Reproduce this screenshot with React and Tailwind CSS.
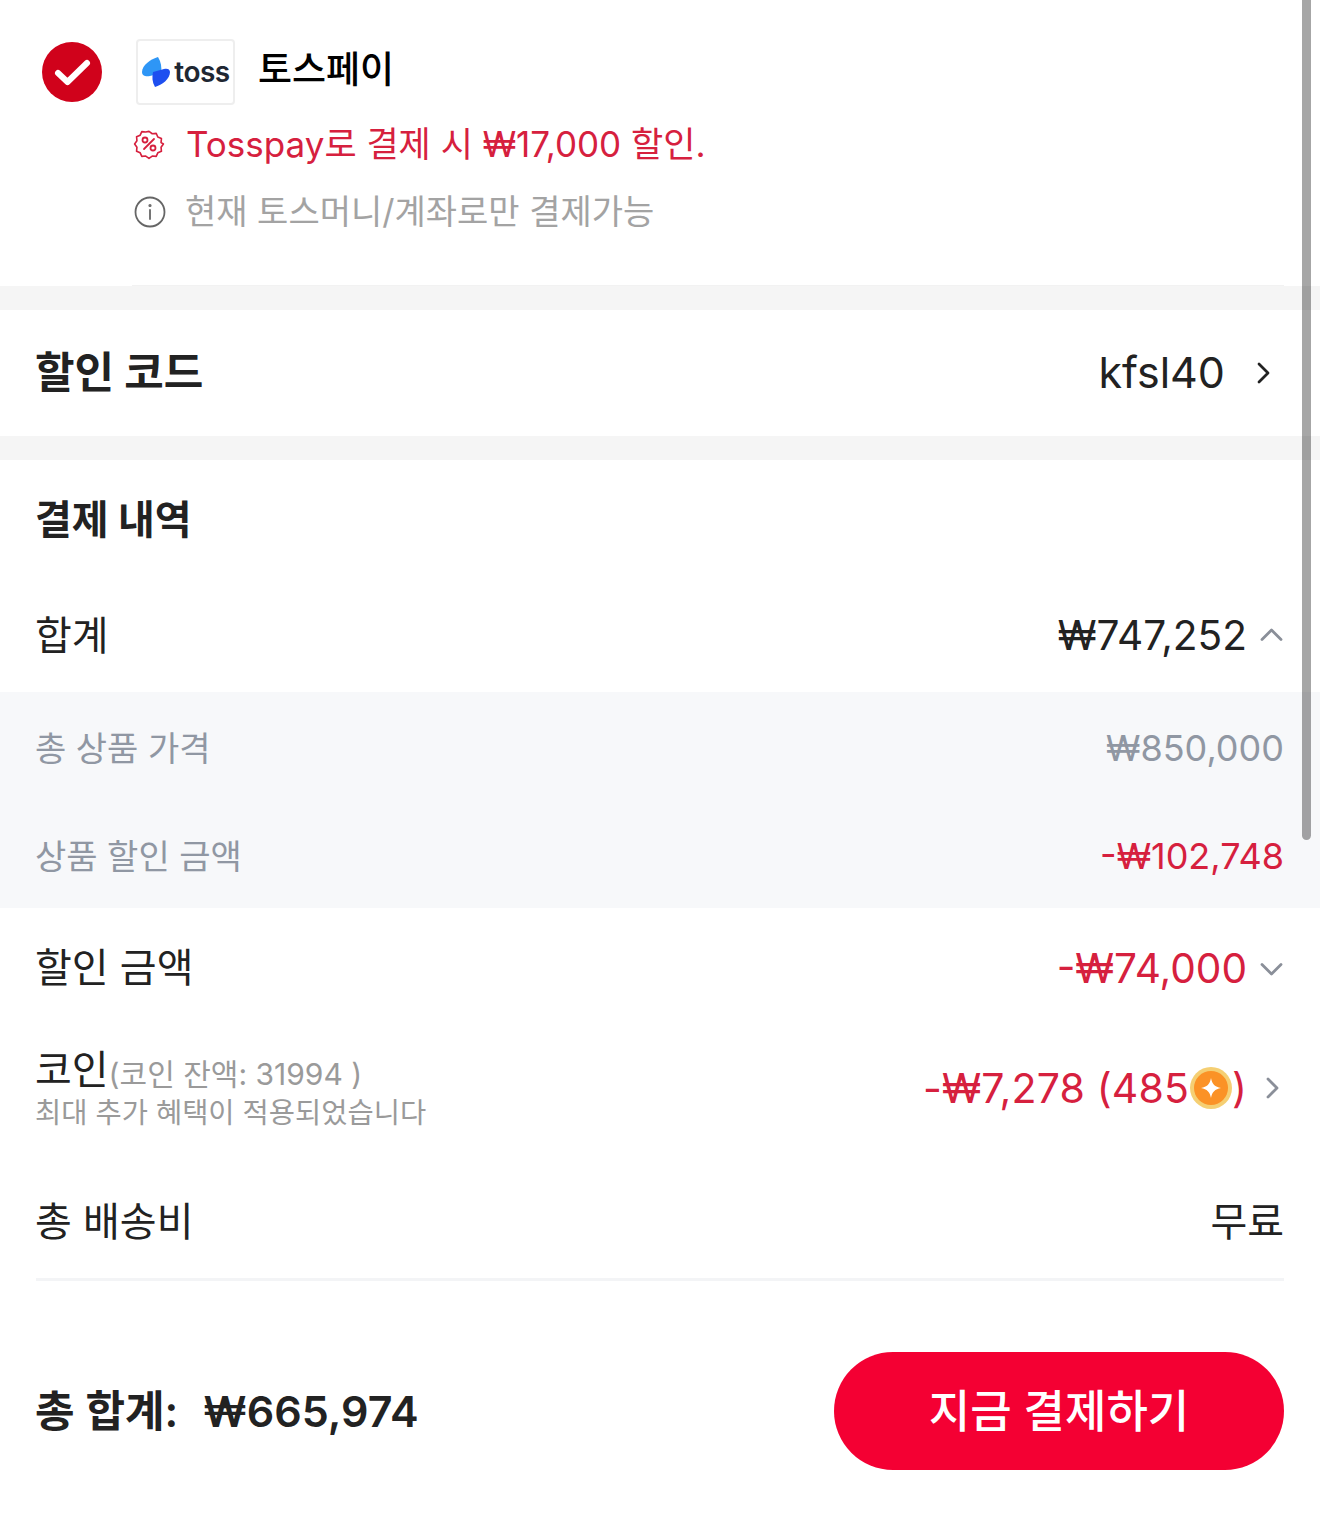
function ChevronRight({ className }) {
  return (
    <svg viewBox="0 0 13 22" className={className} fill="none" stroke="currentColor" strokeWidth="2.800" strokeLinecap="round" strokeLinejoin="round">
      <path d="M2 2l9 9-9 9" />
    </svg>
  );
}
function ChevronUp({ className }) {
  return (
    <svg viewBox="0 0 23 13" className={className} fill="none" stroke="currentColor" strokeWidth="2.800" strokeLinecap="round" strokeLinejoin="round">
      <path d="M2 11.500l9.500-9.500 9.500 9.500" />
    </svg>
  );
}
function ChevronDown({ className }) {
  return (
    <svg viewBox="0 0 23 13" className={className} fill="none" stroke="currentColor" strokeWidth="2.800" strokeLinecap="round" strokeLinejoin="round">
      <path d="M2 1.500l9.500 9.500 9.500-9.500" />
    </svg>
  );
}

function TossLogo() {
  return (
    <div className="ml-[4px] flex h-[66px] w-[99px] items-center justify-center gap-[3px] rounded-[4px] border-2 border-[#eeeeee] bg-white pl-[1px]">
      <svg viewBox="0 0 29 30" className="h-[30px] w-[29px] shrink-0">
        <path d="M16 0C9 2 0 8 0 15c0 4 4 5 8 4l11-3c1-6 0-11-3-16z" fill="#2e96f6" />
        <path d="M13 30c7-2 15-8 15-15 0-3-3-4-6-3l-11 3c-1 5-1 10 2 15z" fill="#1e4ff0" />
      </svg>
      <span className="text-[28px] font-semibold leading-none tracking-[-0.5px] text-[#1f2733]">toss</span>
    </div>
  );
}

function Row({ className = "", children }) {
  return <div className={"flex items-center justify-between " + className}>{children}</div>;
}

export default function App() {
  return (
    <div className="relative h-[1531px] w-[1320px] overflow-hidden bg-white font-['Inter','Noto_Sans_CJK_KR',sans-serif] text-[#222222]">
      <section className="flex h-[286px] pl-[41px] pr-[36px]">
        <div className="pt-[41px]">
          <svg viewBox="0 0 62 62" className="h-[62px] w-[62px]">
            <circle cx="31" cy="31" r="30" fill="#d0021b" />
            <path d="M17 32l9.500 9L46 22" fill="none" stroke="#fff" strokeWidth="6" strokeLinecap="round" strokeLinejoin="round" />
          </svg>
        </div>
        <div className="ml-[29px] flex flex-1 flex-col border-b border-[#f2f2f2]">
          <div className="mt-[39px] flex items-center">
            <TossLogo />
            <span className="-mt-[6px] ml-[23px] text-[37px] font-medium leading-none text-black">토스페이</span>
          </div>
          <div className="mt-[17px] flex h-[44px] items-center">
            <svg viewBox="0 0 32 32" className="ml-[1px] h-[32px] w-[32px]" fill="none" stroke="#d6203e" strokeWidth="1.800" strokeLinecap="round" strokeLinejoin="round">
              <path d="M16 2l3.600 2.600 4.400-.4 1.800 4 4 1.800-.4 4.400L32 16l-2.600 3.600.4 4.400-4 1.800-1.800 4-4.400-.4L16 32l-3.600-2.600-4.400.4-1.800-4-4-1.800.4-4.400L0 16l2.600-3.600-.4-4.400 4-1.800 1.800-4 4.400.4z" transform="translate(1.600 1.600) scale(0.9)" />
              <path d="M21 11L11 21" />
              <circle cx="12" cy="12" r="2.500" />
              <circle cx="20" cy="20" r="2.500" />
            </svg>
            <span className="ml-[21px] text-[35px] leading-none text-[#d6203e]">Tosspay로 결제 시 ₩17,000 할인.</span>
          </div>
          <div className="mt-[24px] flex h-[44px] items-center">
            <svg viewBox="0 0 32 32" className="ml-[2px] h-[32px] w-[32px]" fill="none" stroke="#666666" strokeWidth="1.800" strokeLinecap="round">
              <circle cx="16" cy="16" r="14.500" />
              <path d="M16 14v9" />
              <circle cx="16" cy="9.500" r="0.700" />
            </svg>
            <span className="ml-[19px] text-[34px] leading-none text-[#a3a3a3]">현재 토스머니/계좌로만 결제가능</span>
          </div>
        </div>
      </section>

      <div className="h-[24px] bg-[#f5f5f5]" />

      <Row className="h-[126px] pb-[1px] pl-[35px] pr-[50px]">
        <span className="text-[43px] font-bold leading-none">할인 코드</span>
        <div className="flex items-center">
          <span className="text-[43px] leading-none">kfsl40</span>
          <ChevronRight className="ml-[32px] h-[22px] w-[13px] text-[#222222]" />
        </div>
      </Row>

      <div className="h-[24px] bg-[#f5f5f5]" />

      <section>
        <div className="flex h-[118px] items-center pl-[35px] pr-[36px] pt-[2px]">
          <span className="text-[40px] font-bold leading-none">결제 내역</span>
        </div>
        <Row className="h-[114px] pl-[35px] pr-[37px] pt-[2px]">
          <span className="text-[40px] leading-none">합계</span>
          <div className="flex items-center">
            <span className="text-[40.600px] leading-none">₩747,252</span>
            <ChevronUp className="-mt-[4px] ml-[13px] h-[13px] w-[23px] text-[#8a8f99]" />
          </div>
        </Row>
        <div className="bg-[#f7f8fa]">
          <Row className="h-[108px] pl-[35px] pr-[36px] pt-[4px] text-[#9097a3]">
            <span className="pt-[2px] text-[34px] leading-none">총 상품 가격</span>
            <span className="text-[36px] leading-none">₩850,000</span>
          </Row>
          <Row className="h-[108px] pl-[35px] pr-[36px] pt-[4px]">
            <span className="pt-[2px] text-[34px] leading-none text-[#9097a3]">상품 할인 금액</span>
            <span className="text-[36px] leading-none text-[#d6203e]">-₩102,748</span>
          </Row>
        </div>
        <Row className="h-[120px] pl-[35px] pr-[37px]">
          <span className="text-[40px] leading-none">할인 금액</span>
          <div className="flex items-center pt-[2px]">
            <span className="text-[40.600px] leading-none text-[#d6203e]">-₩74,000</span>
            <ChevronDown className="ml-[13px] h-[13px] w-[23px] text-[#8a8f99]" />
          </div>
        </Row>
        <Row className="h-[120px] pl-[35px] pr-[41px]">
          <div className="flex flex-col">
            <div className="flex items-end">
              <span className="text-[40px] leading-[44px]">코인</span>
              <span className="pb-[3px] text-[30px] leading-none text-[#9a9a9a]">(코인 잔액: 31994 )</span>
            </div>
            <span className="mt-[7px] text-[28.500px] leading-none text-[#9a9a9a]">최대 추가 혜택이 적용되었습니다</span>
          </div>
          <div className="flex items-center">
            <span className="text-[41px] leading-none tracking-[0.16px] text-[#d6203e]">-₩7,278 (485</span>
            <svg viewBox="0 0 42 42" className="ml-[1px] h-[42px] w-[42px]">
              <circle cx="21" cy="21" r="21" fill="#f5cf73" />
              <circle cx="21" cy="21" r="17" fill="#fb9226" />
              <path d="M21 11c1 6 4 9 10 10-6 1-9 4-10 10-1-6-4-9-10-10 6-1 9-4 10-10z" fill="#fff" />
            </svg>
            <span className="text-[41px] leading-none text-[#d6203e]">)</span>
            <ChevronRight className="ml-[19px] h-[22px] w-[13px] text-[#8a8f99]" />
          </div>
        </Row>
        <Row className="mx-[36px] h-[133px] border-b-[3px] border-[#f3f4f6] pt-[18px]">
          <span className="-ml-px text-[40px] leading-none">총 배송비</span>
          <span className="text-[40px] leading-none">무료</span>
        </Row>
      </section>

      <footer className="mt-[71px] flex items-center justify-between pl-[35px] pr-[36px]">
        <div className="flex items-center text-[43px] font-semibold leading-none">
          <span>총 합계:</span>
          <span className="ml-[25px]">₩665,974</span>
        </div>
        <button className="flex h-[118px] w-[450px] items-center justify-center rounded-[59px] bg-[#f40033] text-[45px] font-medium leading-none text-white">
          지금 결제하기
        </button>
      </footer>

      <div className="absolute right-[9px] top-0 h-[840px] w-[9px] rounded-b-full bg-black/35" />
    </div>
  );
}
